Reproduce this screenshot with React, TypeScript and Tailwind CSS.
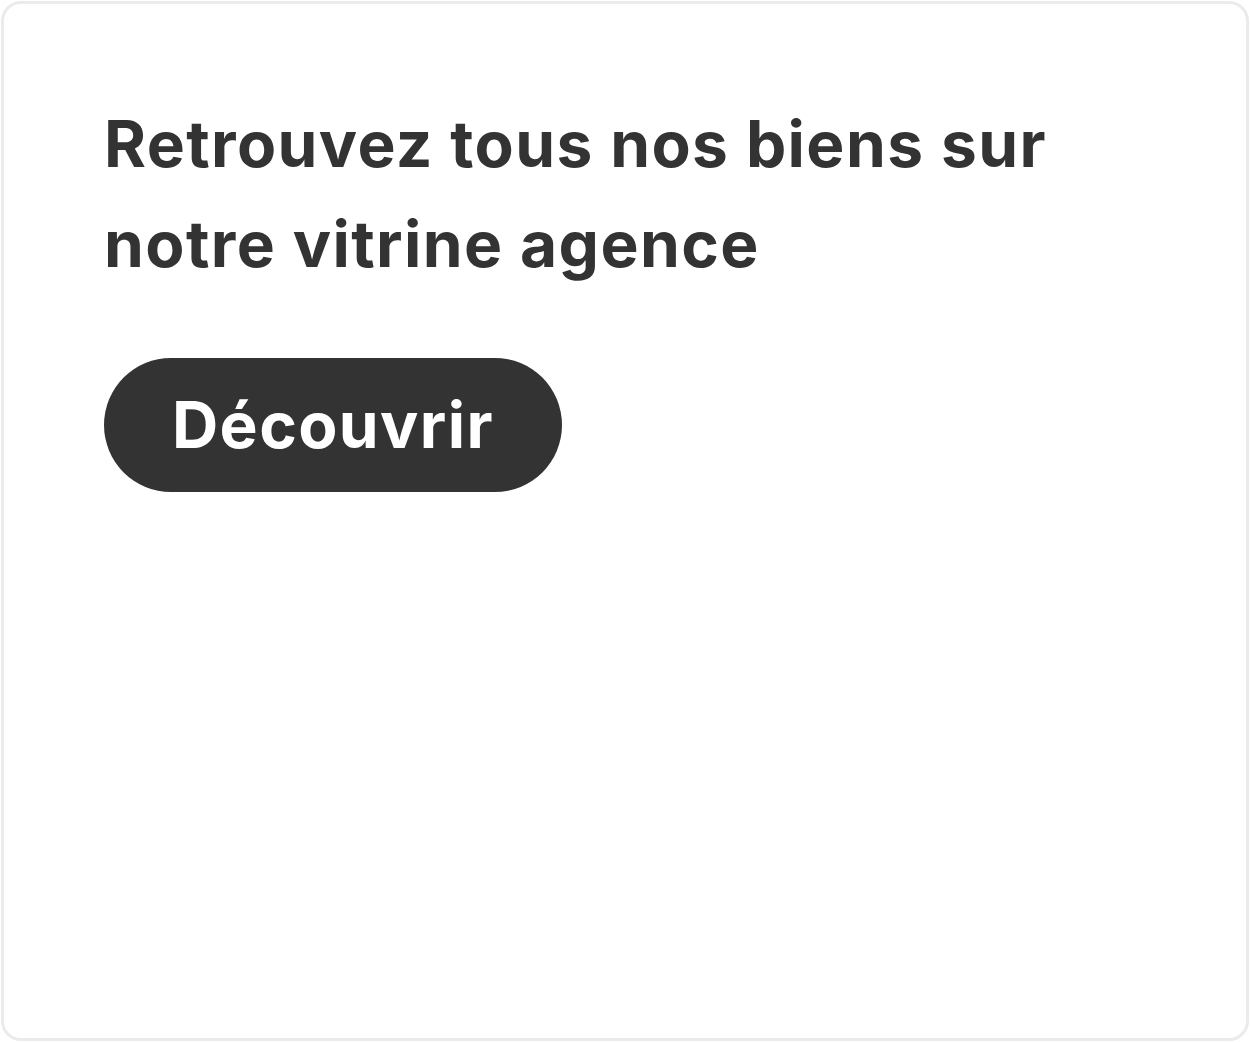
export default function App() {
  return (
    <div className="w-[1250px] h-[1042px] bg-white p-px" style={{ fontFamily: 'Inter, "Noto Sans", sans-serif' }}>
      <div className="h-full w-full rounded-[20px] border-[3px] border-[#ebebeb] bg-white pl-[100px] pr-[100px] pt-[90px]">
        <h1 className="text-[64px] font-bold leading-[100px] tracking-[1.4px] text-[#333333]">
          Retrouvez tous nos biens sur
          <br />
          notre vitrine agence
        </h1>
        <button className="mt-[64px] rounded-full bg-[#333333] px-[68px] py-[17px] text-[64px] font-bold leading-[100px] tracking-[1.4px] text-white">
          Découvrir
        </button>
      </div>
    </div>
  );
}
